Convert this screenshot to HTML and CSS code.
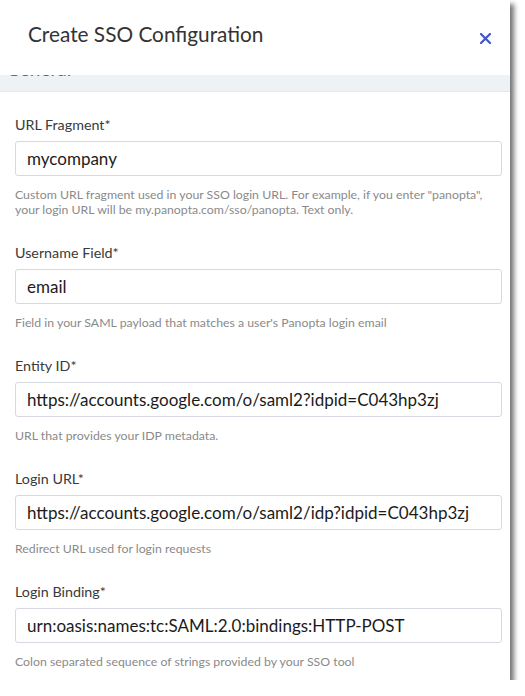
FILE: index.html
```html
<!DOCTYPE html>
<html lang="en">
<head>
<meta charset="utf-8">
<title>Create SSO Configuration</title>
<link rel="stylesheet" href="styles.css">
</head>
<body>
<div class="panel">
  <div class="header">
    <h1 class="title">Create SSO Configuration</h1>
    <button class="close" aria-label="Close">
      <svg width="11" height="11" viewBox="0 0 11 11"><path d="M1 1L10 10M10 1L1 10" stroke="#3f57c8" stroke-width="2.2" stroke-linecap="square" fill="none"/></svg>
    </button>
  </div>
  <div class="section-band"><span class="section-title">General</span></div>
  <div class="content">
    <div class="field">
      <label class="label">URL Fragment*</label>
      <div class="input">mycompany</div>
      <div class="help">Custom URL fragment used in your SSO login URL. For example, if you enter "panopta", your login URL will be my.panopta.com/sso/panopta. Text only.</div>
    </div>
    <div class="field">
      <label class="label">Username Field*</label>
      <div class="input">email</div>
      <div class="help">Field in your SAML payload that matches a user's Panopta login email</div>
    </div>
    <div class="field">
      <label class="label">Entity ID*</label>
      <div class="input">https://accounts.google.com/o/saml2?idpid=C043hp3zj</div>
      <div class="help">URL that provides your IDP metadata.</div>
    </div>
    <div class="field">
      <label class="label">Login URL*</label>
      <div class="input">https://accounts.google.com/o/saml2/idp?idpid=C043hp3zj</div>
      <div class="help">Redirect URL used for login requests</div>
    </div>
    <div class="field">
      <label class="label">Login Binding*</label>
      <div class="input">urn:oasis:names:tc:SAML:2.0:bindings:HTTP-POST</div>
      <div class="help">Colon separated sequence of strings provided by your SSO tool</div>
    </div>
  </div>
</div>
</body>
</html>
```
FILE: styles.css
```css
* { box-sizing: border-box; }
html, body { margin: 0; padding: 0; background: #fff; }
body { font-family: Lato, "Open Sans", sans-serif; color: #333; }

.panel {
  width: 510px;
  height: 680px;
  background: #fff;
  box-shadow: 4px 4px 5px rgba(0,0,0,0.55);
  display: flex;
  flex-direction: column;
}

.header {
  height: 75px;
  padding: 21px 19px 0 28px;
  display: flex;
  justify-content: space-between;
  align-items: flex-start;
}
.title {
  margin: 0;
  font-size: 20.8px;
  line-height: 25px;
  font-weight: 400;
  color: #333;
}
.close {
  border: 0;
  background: none;
  padding: 0;
  margin-top: 12px;
  width: 11px;
  height: 11px;
  display: flex;
}

.section-band {
  height: 17px;
  background: #eff2f5;
  border-bottom: 1px solid #e3e6ea;
  overflow: hidden;
  padding-left: 6px;
}
.section-title {
  display: block;
  margin-top: -17px;
  font-size: 19px;
  line-height: 22px;
  color: #666;
}

.content {
  padding: 24px 8px 0 15px;
  display: flex;
  flex-direction: column;
  gap: 27px;
}
.field { display: flex; flex-direction: column; }
.label {
  font-size: 14.3px;
  line-height: 18px;
  color: #3a3a3a;
  margin-bottom: 7px;
}
.input {
  height: 35px;
  border: 1px solid #d6d9df;
  border-radius: 3px;
  padding: 0 11px;
  font-size: 17px;
  line-height: 33px;
  color: #1b1b1b;
  white-space: nowrap;
  overflow: hidden;
}
.help {
  margin-top: 11px;
  padding-right: 12px;
  font-size: 12.3px;
  line-height: 15px;
  color: #8a8a8a;
}
```
